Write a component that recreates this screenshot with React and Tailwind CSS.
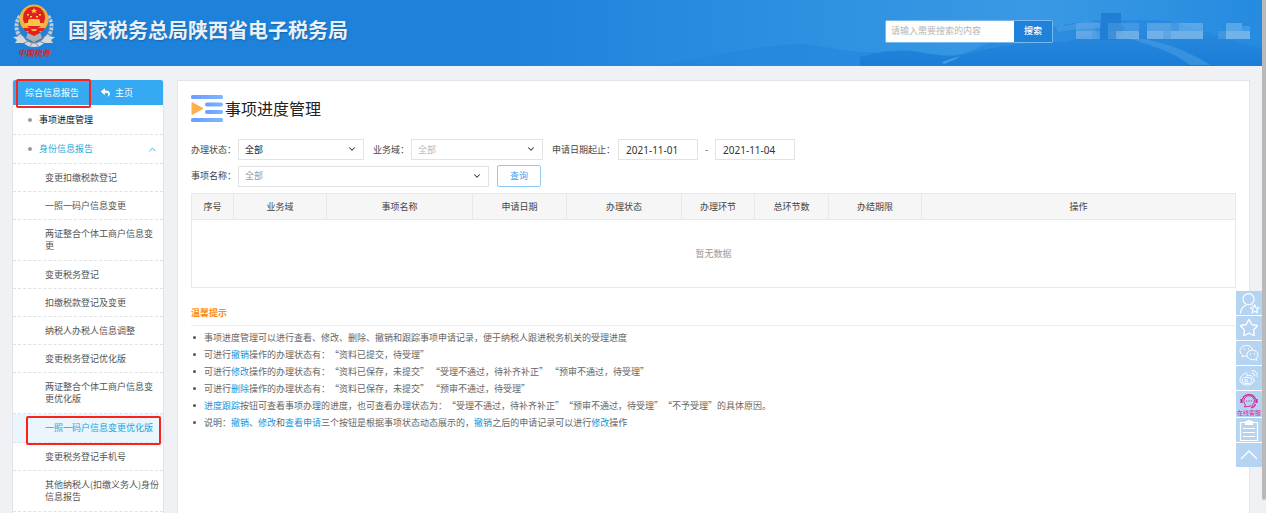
import { ChevronDown, ChevronUp, Star } from 'lucide-react';
import { FaReply } from 'react-icons/fa';

const menuItems = [
    { label: '变更扣缴税款登记' },
    { label: '一照一码户信息变更' },
    { label: '两证整合个体工商户信息变更', tall: true },
    { label: '变更税务登记' },
    { label: '扣缴税款登记及变更' },
    { label: '纳税人办税人信息调整' },
    { label: '变更税务登记优化版' },
    { label: '两证整合个体工商户信息变更优化版', tall: true },
    { label: '一照一码户信息变更优化版', active: true },
    { label: '变更税务登记手机号' },
    { label: '其他纳税人(扣缴义务人)身份信息报告', tall: true },
];

const columns = [
    { label: '序号', width: 'w-[42px]' },
    { label: '业务域', width: 'w-[93px]' },
    { label: '事项名称', width: 'w-[146px]' },
    { label: '申请日期', width: 'w-[94px]' },
    { label: '办理状态', width: 'w-[115px]' },
    { label: '办理环节', width: 'w-[73px]' },
    { label: '总环节数', width: 'w-[74px]' },
    { label: '办结期限', width: 'w-[93px]' },
    { label: '操作', width: '' },
];

const mosaic = [
    [1076, 23, 24, 8, 0.12], [1076, 31, 16, 8, 0.26], [1092, 31, 8, 8, 0.2],
    [1108, 23, 31, 8, 0.12], [1108, 31, 8, 8, 0.14], [1116, 31, 23, 8, 0.32],
    [1147, 23, 24, 8, 0.2], [1171, 23, 8, 8, 0.14], [1179, 23, 24, 8, 0.22],
    [1147, 31, 16, 8, 0.34], [1163, 31, 8, 8, 0.26], [1171, 31, 32, 8, 0.34],
    [1218, 31, 8, 8, 0.1], [1226, 23, 16, 8, 0.22], [1242, 26, 8, 5, 0.12], [1226, 31, 24, 8, 0.34],
];

const Emblem = () => (
    <svg viewBox="0 0 44 43" className="w-11 h-[43px]">
        <path d="M8 12C2 20 4 31 12 36M36 12c6 8 4 19-4 24" fill="none" stroke="#c4c9cf" strokeWidth="4" strokeDasharray="3 1" />
        <path d="M9 11C5 20 6 28 13 34M35 11c4 9 3 17-4 23" fill="none" stroke="#7d858e" strokeWidth="1" strokeDasharray="2 2" />
        <path d="M1 33l10-1c3 5 7 7 11 7s8-2 11-7l10 1-4 3 2 3-9 0c-3 3-6 4-10 4s-7-1-10-4l-9 0 2-3z" fill="#d5d9dd" />
        <path d="M11 32c3 5 7 7 11 7s8-2 11-7M12 39l5-2M32 39l-5-2M18 42l4-5 4 5" fill="none" stroke="#858c94" strokeWidth="1" />
        <path d="M16 28h12l2 6-8 4-8-4z" fill="#aab0b7" />
        <circle cx="22" cy="15" r="14.5" fill="#eeb43c" />
        <circle cx="22" cy="13.5" r="11" fill="#e3201f" />
        <path d="M22 4l.9 2h2.1l-1.7 1.3.7 2.1-2-1.3-2 1.3.7-2.1L19 6h2.1z" fill="#ffd64a" />
        <path d="M15 10h2v1.500h-2zM27 10h2v1.500h-2zM18 12h2v1.500h-2zM24 12h2v1.500h-2z" fill="#ffd64a" />
        <path d="M16 17l1-2h10l1 2v2h3v3H13v-3h3z" fill="#f6c646" />
        <path d="M11 24h22l-2 3H13z" fill="#d9261f" />
        <path d="M17 24h10l1 5-6 3-6-3z" fill="#e3201f" />
        <path d="M19 25h6l-1 2h-4z" fill="#f0b83c" />
    </svg>
);

const HeaderArt = () => (
    <svg viewBox="500 0 762 66" className="absolute right-0 top-0 h-full w-[762px]">
        <defs>
            <linearGradient id="sky" x1="0" x2="1" y1="0" y2="0">
                <stop offset="0" stopColor="#1e82db" />
                <stop offset="0.45" stopColor="#2f92e2" />
                <stop offset="0.7" stopColor="#3a99e4" />
                <stop offset="1" stopColor="#258be0" />
            </linearGradient>
            <linearGradient id="hill" x1="0" x2="0" y1="0" y2="1">
                <stop offset="0" stopColor="#2a8ade" />
                <stop offset="1" stopColor="#1a7dd6" />
            </linearGradient>
        </defs>
        <rect x="500" width="762" height="66" fill="url(#sky)" />
        <path d="M650 66c60-8 100-20 150-22 30 2 50 10 80 8 30-4 50 6 80 2 20-4 30-18 60-20 20-4 50-12 80-14h60c30 4 60 20 102 26v20z" fill="#2386dc" opacity="0.6" />
        <path d="M860 57c20-6 40-8 60-5 20 4 30 6 45 2 30-8 60-12 100-12l36-12 60-4c30 8 60 10 101 24v16H860z" fill="url(#hill)" />
        <path d="M1101 13h20v12l4 3-8 12h-17l-7-14h8z" fill="#1e7fd5" />
        <path d="M1056 27l6-3 3 2 14-3 7-3 14 3v5l-22 1-20 3zM1128 38c20 0 40 6 56 13 8 4 18 8 26 14h-20c-14-12-40-20-62-27z" fill="#4c9fe4" opacity="0.55" />
        <path d="M942 62l18-6-4 3-12 5z" fill="#68aee9" opacity="0.6" />
        {mosaic.map(([x, y, w, h, o]) => (
            <rect key={`${x}-${y}`} x={x} y={y} width={w} height={h} fill="#fff" opacity={o} />
        ))}
    </svg>
);

const Header = () => (
    <header className="relative flex h-[66px] shrink-0 items-center bg-[#1e82db] pl-3">
        <HeaderArt />
        <div className="relative flex flex-col items-center pb-1">
            <Emblem />
            <span className="text-[8px] font-bold italic leading-3 text-[#d9251d]">中国税务</span>
        </div>
        <h1 className="relative ml-3 flex-1 pb-1.5 text-xl font-bold leading-7 text-[#e9f0f8] [text-shadow:1px_1px_2px_#1764ab]">
            国家税务总局陕西省电子税务局
        </h1>
        <form className="relative mr-[209px] mb-1 flex h-[23px] w-[168px] rounded-xs border border-[#79b8ee] bg-white">
            <input
                type="text"
                aria-label="搜索"
                placeholder="请输入需要搜索的内容"
                className="min-w-0 flex-1 rounded-l-xs bg-white px-[5px] placeholder:text-[#b5b5b5]"
            />
            <button type="button" className="w-[38px] bg-[#1e82db] font-medium text-white">搜索</button>
        </form>
    </header>
);

const Sidebar = () => (
    <aside className="w-[152px] shrink-0 self-stretch border-x border-[#e2e4e7] bg-white">
        <div className="relative flex h-[25px] items-center rounded-t-xs bg-[#35aaf3] pl-3 text-white">
            <span>综合信息报告</span>
            <a href="#" className="ml-[22px] flex items-center gap-[5px]">
                <FaReply className="size-[9px]" />
                主页
            </a>
            <span className="absolute -top-px left-[3px] h-[29px] w-[75px] rounded-xs border-2 border-[#f9231c]" />
        </div>
        <nav>
            <a href="#" className="flex h-[30px] items-center border-b border-dashed border-[#dfe2e5] pl-[15px] text-[#111]">
                <span className="mr-[7px] size-1 rounded-full bg-[#999]" />
                事项进度管理
            </a>
            <button type="button" className="flex h-[29px] w-full items-center border-b border-dashed border-[#dfe2e5] pl-[15px] pr-[5px] text-[#28a9d8]">
                <span className="mr-[7px] size-1 rounded-full bg-[#999]" />
                <span className="flex-1 text-left">身份信息报告</span>
                <ChevronUp className="size-[11px]" strokeWidth={2} />
            </button>
            <ul>
                {menuItems.map(({ label, tall, active }) => (
                    <li key={label} className={active ? 'relative bg-[#ebf5fd]' : ''}>
                        <a
                            href="#"
                            className={`block border-b border-dashed border-[#dfe2e5] pl-8 pr-0.5 leading-3 ${tall || active ? 'py-2' : 'pt-2 pb-[7px]'} ${active ? 'text-[#1ba5d8]' : 'text-[#555]'}`}
                        >
                            {label}
                        </a>
                        {active && (
                            <span className="pointer-events-none absolute top-0.5 left-[13px] h-[29px] w-[135px] rounded-xs border-2 border-[#f9231c]" />
                        )}
                    </li>
                ))}
            </ul>
        </nav>
    </aside>
);

const SelectField = ({ id, label, width, color }) => (
    <div className="flex items-center">
        <label htmlFor={id} className="mr-0.5 whitespace-nowrap">{label}</label>
        <div className={`relative ${width}`}>
            <select id={id} className={`h-[21px] w-full appearance-none border border-[#e3e3e3] bg-white pl-1.5 ${color}`}>
                <option>全部</option>
            </select>
            <ChevronDown className="pointer-events-none absolute right-[7px] top-[5px] size-2.5 text-[#333]" strokeWidth={2.5} />
        </div>
    </div>
);

const Filters = () => (
    <div className="mt-[17px] space-y-[5px] text-[#444]">
        <div className="flex items-center gap-[9px]">
            <SelectField id="status" label="办理状态：" width="w-[126px]" color="text-[#222]" />
            <SelectField id="domain" label="业务域：" width="w-[132px]" color="text-[#bbb]" />
            <div className="flex items-center">
                <label htmlFor="from" className="mr-[3px]">申请日期起止：</label>
                <input id="from" type="text" defaultValue="2021-11-01" className="h-[21px] w-20 border border-[#e3e3e3] px-[7px] font-['Noto_Sans'] text-[10px] text-[#333]" />
                <span className="w-[17px] text-center">-</span>
                <input type="text" aria-label="截止日期" defaultValue="2021-11-04" className="h-[21px] w-20 border border-[#e3e3e3] px-[7px] font-['Noto_Sans'] text-[10px] text-[#333]" />
            </div>
        </div>
        <div className="flex items-center gap-2">
            <SelectField id="name" label="事项名称：" width="w-[251px]" color="text-[#999]" />
            <button type="button" className="h-[22px] w-11 rounded-xs border border-[#8cc8f8] text-[#419ff0]">查询</button>
        </div>
    </div>
);

const ProgressTable = () => (
    <table className="mt-1.5 w-full table-fixed border-collapse border border-[#e9e9e9] text-[#444]">
        <thead>
            <tr className="h-[26px] bg-[#f6f6f6]">
                {columns.map(({ label, width }) => (
                    <th key={label} className={`border border-[#e9e9e9] font-normal ${width}`}>{label}</th>
                ))}
            </tr>
        </thead>
        <tbody>
            <tr className="h-[68px]">
                <td colSpan={9} className="text-center text-[#999]">暂无数据</td>
            </tr>
        </tbody>
    </table>
);

const Op = ({ children }) => <span className="text-[#1296db]">{children}</span>;

const Tips = () => (
    <section className="mt-[18px] text-[#666] [text-spacing-trim:space-all]">
        <h3 className="border-b border-[#ececec] pb-[5px] font-bold leading-[14px] text-[#ff8d1a]">温馨提示</h3>
        <ul className="mt-[3px] list-none leading-[17px] [&>li]:flex [&>li]:before:mr-2 [&>li]:before:ml-[2px] [&>li]:before:mt-[7px] [&>li]:before:size-[3px] [&>li]:before:rounded-full [&>li]:before:bg-[#555]">
            <li><p>事项进度管理可以进行查看、修改、删除、撤销和跟踪事项申请记录，便于纳税人跟进税务机关的受理进度</p></li>
            <li><p>可进行<Op>撤销</Op>操作的办理状态有：“资料已提交，待受理”</p></li>
            <li><p>可进行<Op>修改</Op>操作的办理状态有：“资料已保存，未提交” “受理不通过，待补齐补正” “预审不通过，待受理”</p></li>
            <li><p>可进行<Op>删除</Op>操作的办理状态有：“资料已保存，未提交” “预审不通过，待受理”</p></li>
            <li><p><Op>进度跟踪</Op>按钮可查看事项办理的进度，也可查看办理状态为：“受理不通过，待补齐补正”“预审不通过，待受理”“不予受理”的具体原因。</p></li>
            <li><p>说明：<Op>撤销</Op>、<Op>修改</Op>和<Op>查看申请</Op>三个按钮是根据事项状态动态展示的，<Op>撤销</Op>之后的申请记录可以进行<Op>修改</Op>操作</p></li>
        </ul>
    </section>
);

const toolClass = 'flex h-6 w-full items-center justify-center bg-[#b5d4f2] text-white';

const FloatingTools = () => (
    <div className="fixed right-1 top-[291px] flex w-[27px] flex-col gap-px border-l border-white bg-white">
        <button type="button" aria-label="个人中心" className={toolClass}>
            <svg viewBox="0 0 24 24" className="size-[23px]" fill="none" stroke="currentColor" strokeWidth="1.2">
                <circle cx="11" cy="7.500" r="5.800" />
                <path d="M2.500 22.500c.4-4.500 2.500-7.500 6-9M14 13.200l1.500.8" />
                <path d="M17.500 13.500l1.300 2.700 3 .4-2.200 2 .6 3-2.700-1.400-2.700 1.400.6-3-2.200-2 3-.4z" />
            </svg>
        </button>
        <button type="button" aria-label="收藏" className={toolClass}><Star className="size-5" strokeWidth={1.6} /></button>
        <button type="button" aria-label="微信" className={toolClass}>
            <svg viewBox="0 0 20 20" className="size-5" fill="none" stroke="currentColor" strokeWidth="1">
                <path d="M8 13.300c-.9 0-1.700-.1-2.500-.4L3 14l.6-2.200C2.100 10.700 1 9.300 1 7.700 1 4.800 4 2.500 7.500 2.500c3 0 5.600 1.800 6.200 4.200" />
                <path d="M19 11.900c0-2.700-2.500-4.800-5.600-4.800S8 9.200 8 11.900s2.400 4.800 5.400 4.800c.7 0 1.400-.1 2-.3l2.200 1-.5-1.900c1.200-.9 1.900-2.200 1.900-3.600z" />
                <path d="M5 6.200h1M9 6.200h1M11 10.800h1M15 10.800h1" strokeWidth="1.300" />
            </svg>
        </button>
        <button type="button" aria-label="微博" className={toolClass}>
            <svg viewBox="0 0 20 20" className="size-5" fill="none" stroke="currentColor" strokeWidth="1">
                <path d="M8 6.500C9 4.800 6.800 4.300 4.800 6 2.700 7.700 1 10 1 12.200 1 15 4.300 17 8 17c4.200 0 7.300-2.400 7.300-4.700 0-1.500-1.200-2.300-2.300-2.600.6-1.600-.2-2.500-1.600-2.500-1.300 0-2.600.5-3.600.9.2-.6.5-1.200.2-1.600z" />
                <ellipse cx="8" cy="12.500" rx="4.800" ry="3.100" />
                <circle cx="7.200" cy="12.800" r="1.400" />
                <path d="M12.500 2.800c3.500-.7 6.500 2.400 5.500 6M12.800 5.300c1.900-.3 3.300 1.200 2.800 3" />
            </svg>
        </button>
        <button type="button" className="flex h-[26px] w-full flex-col items-center justify-center bg-[#b5d4f2] text-[#d6259a]">
            <svg viewBox="0 0 20 17" className="h-[17px] w-5" fill="none" stroke="currentColor" strokeWidth="1.2">
                <path d="M3.500 7a6.800 6.300 0 0 1 13 0" />
                <path d="M5.500 15l.9-2.200A5.300 5.300 0 1 1 10 14.300z" strokeWidth="1" />
                <path d="M2.500 7v4M17.500 7v4" strokeWidth="2.200" />
                <path d="M7 9h1.200M9.400 9h1.200M11.800 9H13" />
                <path d="M16.500 12c-.8 2.300-2.300 3.500-4.500 3.800" />
            </svg>
            <span className="text-[6px] leading-[7px]">在线客服</span>
        </button>
        <button type="button" aria-label="办税清单" className={toolClass}>
            <svg viewBox="0 0 20 24" className="h-6 w-5" fill="none" stroke="currentColor" strokeWidth="1.200">
                <path d="M1.500 4.500h17v18h-17z" />
                <path d="M6.500 6.500v-3h1.800a1.800 1.800 0 0 1 3.400 0h1.800v3z" fill="#fff" />
                <path d="M4 10.500h12M4 14.500h12M4 18.500h12" />
            </svg>
        </button>
        <button type="button" aria-label="返回顶部" className={toolClass}>
            <svg viewBox="0 0 20 20" className="size-5" fill="none" stroke="currentColor" strokeWidth="1.300">
                <path d="M2 14l8-8 8 8" />
            </svg>
        </button>
    </div>
);

const TitleIcon = () => (
    <svg viewBox="0 0 32 27" className="h-[27px] w-8">
        <defs>
            <linearGradient id="bar" x1="0" x2="1" y1="0" y2="0">
                <stop offset="0" stopColor="#6c9dff" />
                <stop offset="1" stopColor="#7ab8ff" />
            </linearGradient>
        </defs>
        <g fill="url(#bar)">
            <rect width="32" height="4" rx="1.500" />
            <rect x="14" y="7.500" width="18" height="4" rx="2" />
            <rect x="14" y="15" width="18" height="4" rx="2" />
            <rect y="23" width="32" height="4" rx="1.500" />
        </g>
        <path d="M1 7.500l11 6-11 6z" fill="#ffb04d" stroke="#ffb04d" strokeLinejoin="round" />
    </svg>
);

const App = () => (
    <div lang="zh-CN" className="flex h-screen overflow-hidden bg-[#f0f1f4] font-['Noto_Sans_CJK_SC',sans-serif] text-[9px] leading-3">
        <div className="flex min-w-0 flex-1 flex-col">
            <Header />
            <div className="flex min-h-0 flex-1 items-start gap-[13px] pt-3.5 pl-3 pr-3">
                <Sidebar />
                <main className="min-w-0 flex-1 self-stretch border border-b-0 border-[#e2e4e7] bg-white px-[13px] pt-[13px]">
                    <h2 className="flex h-7 items-center gap-0.5 text-base text-[#222]">
                        <TitleIcon />
                        事项进度管理
                    </h2>
                    <Filters />
                    <ProgressTable />
                    <Tips />
                </main>
            </div>
        </div>
        <div className="w-1 shrink-0 bg-[#f0f0f0] pb-[13px]">
            <div className="h-full rounded-b-xs bg-[#b9b9b9]" />
        </div>
        <FloatingTools />
    </div>
);

export default App;
